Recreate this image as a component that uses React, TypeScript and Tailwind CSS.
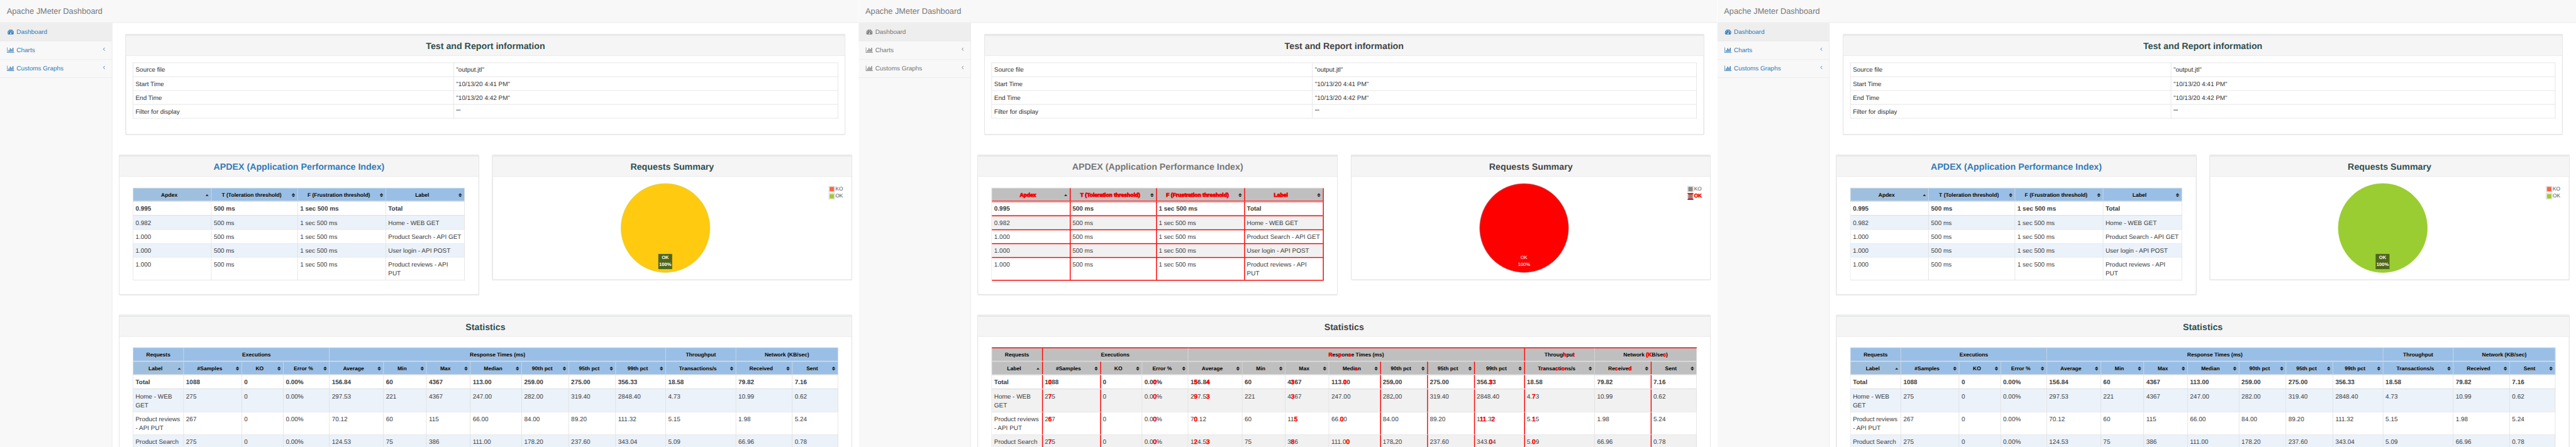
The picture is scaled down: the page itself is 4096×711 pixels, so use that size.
import React from "react";
import clsx from "clsx";

type Variant = "before" | "diff" | "after";

interface Theme {
  link: string;
  title: string;
  apdexTitle: string;
  bar: string;
  head: string;
  headSorted: string;
  zebra: string;
  info: string;
  pie: string;
  pieEdge: string;
  label: string;
  ko: string;
  ok: string;
}

const THEMES: Record<Variant, Theme> = {
  before: {
    link: "text-[#337ab7]",
    title: "text-[#2f4f4f]",
    apdexTitle: "text-[#337ab7]",
    bar: "bg-[#e7eaec]",
    head: "bg-[#99bfe6]",
    headSorted: "bg-[#9fbfdf]",
    zebra: "bg-[#ebf2fa]",
    info: "text-[#333]",
    pie: "fill-[#ffca10]",
    pieEdge: "stroke-[#c8dc6a]",
    label: "bg-[#4d661a] font-bold",
    ko: "bg-[#ff6347]",
    ok: "bg-[#9acd32]",
  },
  diff: {
    link: "text-[#777]",
    title: "text-[#444]",
    apdexTitle: "text-[#777]",
    bar: "bg-[#e8e8e8]",
    head: "bg-[#bfbfbf]",
    headSorted: "bg-[#bfbfbf]",
    zebra: "bg-[#f1f1f1]",
    info: "text-[#333]",
    pie: "fill-[#ff0000]",
    pieEdge: "stroke-[#999]",
    label: "",
    ko: "bg-[#888]",
    ok: "bg-[#888]",
  },
  after: {
    link: "text-[#337ab7]",
    title: "text-[#2f4f4f]",
    apdexTitle: "text-[#337ab7]",
    bar: "bg-[#e7eaec]",
    head: "bg-[#99bfe6]",
    headSorted: "bg-[#9fbfdf]",
    zebra: "bg-[#ebf2fa]",
    info: "text-[#333]",
    pie: "fill-[#9acd32]",
    pieEdge: "stroke-[#9acd32]",
    label: "bg-[#4d661a] font-bold",
    ko: "bg-[#ff6347]",
    ok: "bg-[#9acd32]",
  },
};

/* Characters between asterisks are the ones that changed; only the diff view marks them. */
function Marked({ text, variant }: { text: string; variant: Variant }) {
  const parts = text.split("*");
  if (variant !== "diff") return <>{parts.join("")}</>;
  return (
    <>
      {parts.map((p, i) =>
        i % 2 === 1 ? (
          <span key={i} className="text-[#ff0000] [-webkit-text-stroke:1px_#ff0000]">
            {p}
          </span>
        ) : (
          p
        ),
      )}
    </>
  );
}

function DashboardIcon() {
  return (
    <svg className="h-[14px] w-[18px] shrink-0 fill-current" viewBox="-256 0 2304 1792">
      <path d="M384 1152q0-53-37.5-90.5t-90.5-37.5-90.5 37.5-37.5 90.5 37.5 90.5 90.5 37.5 90.5-37.5 37.5-90.5zm192-448q0-53-37.5-90.5t-90.5-37.5-90.5 37.5-37.5 90.5 37.5 90.5 90.5 37.5 90.5-37.5 37.5-90.5zm428 481l101-382q6-26-7.5-48.5t-38.5-29.5-48 6.5-30 39.5l-101 382q-60 5-107 43.5t-63 98.5q-20 77 20 146t117 89 146-20 89-117q16-60-6-117t-72-91zm660-33q0-53-37.5-90.5t-90.5-37.5-90.5 37.5-37.5 90.5 37.5 90.5 90.5 37.5 90.5-37.5 37.5-90.5zm-640-640q0-53-37.5-90.5t-90.5-37.5-90.5 37.5-37.5 90.5 37.5 90.5 90.5 37.5 90.5-37.5 37.5-90.5zm448 192q0-53-37.5-90.5t-90.5-37.5-90.5 37.5-37.5 90.5 37.5 90.5 90.5 37.5 90.5-37.5 37.5-90.5zm320 448q0 261-141 483-19 29-54 29h-1402q-35 0-54-29-141-221-141-483 0-182 71-348t191-286 286-191 348-71 348 71 286 191 191 286 71 348z" />
    </svg>
  );
}

function ChartIcon() {
  return (
    <svg className="h-[14px] w-[18px] shrink-0 fill-current" viewBox="-128 0 2304 1792">
      <path d="M640 896v512h-256v-512h256zm384-512v1024h-256v-1024h256zm1024 1152v128h-2048v-1536h128v1408h1920zm-640-896v768h-256v-768h256zm384-384v1152h-256v-1152h256z" />
    </svg>
  );
}

function Chevron() {
  return (
    <svg className="mb-[5px] ml-auto h-[8px] w-[5px]" viewBox="0 0 5 8" fill="none" stroke="currentColor" strokeWidth="1.3">
      <path d="M4.5 0.5L1 4l3.5 3.5" />
    </svg>
  );
}

function SortIcon({ sorted }: { sorted?: boolean }) {
  return (
    <svg className="ml-[5px] h-[9px] w-[8px] shrink-0 fill-[#222]" viewBox="0 0 8 9">
      {sorted ? (
        <path d="M0.5 6.5L4 2.5l3.5 4z" />
      ) : (
        <>
          <path d="M0 4L4 0l4 4z" />
          <path d="M0 5h8L4 9z" />
        </>
      )}
    </svg>
  );
}

function Sidebar({ theme }: { theme: Theme }) {
  const item = "flex h-[41px] items-center border-b border-[#e7e7e7] pl-[15px] pr-[15px]";
  return (
    <nav className={clsx("w-[251px] shrink-0 border-r border-[#e7e7e7] bg-[#f8f8f8] text-[14px] leading-[20px]", theme.link)}>
      <a className={clsx(item, "bg-[#eeeeee]")}>
        <DashboardIcon />
        <span className="pl-[4px]">Dashboard</span>
      </a>
      <a className={item}>
        <ChartIcon />
        <span className="pl-[4px]">Charts</span>
        <Chevron />
      </a>
      <a className={item}>
        <ChartIcon />
        <span className="pl-[4px]">Customs Graphs</span>
        <Chevron />
      </a>
    </nav>
  );
}

interface PanelProps {
  title: string;
  titleClass: string;
  theme: Theme;
  className: string;
  children: React.ReactNode;
}

function Panel({ title, titleClass, theme, className, children }: PanelProps) {
  return (
    <section className={clsx("rounded-[2px] border border-[#ddd] bg-white shadow-[0_1px_1px_rgba(0,0,0,0.08)]", className)}>
      <div className={clsx("h-[4px]", theme.bar)} />
      <div className="flex h-[44px] items-center justify-center border-b border-[#e4e6e8] bg-[#f5f5f5] pt-[2px]">
        <h2 className={clsx("text-[20px] leading-[22px] font-bold", titleClass)}>{title}</h2>
      </div>
      {children}
    </section>
  );
}

const INFO = [
  ["Source file", '"output.jtl"'],
  ["Start Time", '"10/13/20 4:41 PM"'],
  ["End Time", '"10/13/20 4:42 PM"'],
  ["Filter for display", '""'],
];

function Columns({ widths }: { widths: number[] }) {
  return (
    <colgroup>
      {widths.map((w, i) => (
        <col key={i} style={{ width: w }} />
      ))}
    </colgroup>
  );
}

const TABLE = "table-fixed border-separate border-spacing-0 border-t border-l border-[#ddd] text-left text-[14px] leading-[20px]";

function InfoTable({ theme }: { theme: Theme }) {
  return (
    <table className={clsx(TABLE, "mx-[15px] mt-[15px] w-[1577px]", theme.info)}>
      <Columns widths={[717, 859]} />
      <tbody>
        {INFO.map(([k, v]) => (
          <tr key={k}>
            <td className="h-[31px] border-r border-b border-[#ddd] px-[5px] py-0">{k}</td>
            <td className="h-[31px] border-r border-b border-[#ddd] px-[5px] py-0">{v}</td>
          </tr>
        ))}
      </tbody>
    </table>
  );
}

const HEAD = "h-[30px] border-r border-b-2 border-[#ddd] p-0 text-[12px] leading-[18px] font-bold text-black";
const HEAD_SHADOW = "[text-shadow:0_1px_0_rgba(204,204,204,0.7)]";
const RED_RIGHT = "relative after:absolute after:top-0 after:bottom-0 after:-right-[2px] after:z-10 after:w-[2px] after:bg-[#ff0000] after:content-['']";
const RED_RIGHT_FULL = "relative after:absolute after:top-0 after:-bottom-[2px] after:-right-[2px] after:z-10 after:w-[2px] after:bg-[#ff0000] after:content-['']";
const RED_DOUBLE = "before:absolute before:left-0 before:right-0 before:-bottom-[3px] before:z-10 before:h-[3px] before:border-y before:border-[#ff0000] before:bg-[#ddd] before:content-['']";
const RED_BOTTOM = "before:absolute before:left-0 before:right-0 before:-bottom-[2px] before:z-10 before:h-[2px] before:bg-[#ff0000] before:content-['']";

const APDEX_HEAD = ["Apdex", "T (Toleration threshold)", "F (Frustration threshold)", "Label"];
const APDEX_ROWS = [
  ["0.995", "500 ms", "1 sec 500 ms", "Total"],
  ["0.982", "500 ms", "1 sec 500 ms", "Home - WEB GET"],
  ["1.000", "500 ms", "1 sec 500 ms", "Product Search - API GET"],
  ["1.000", "500 ms", "1 sec 500 ms", "User login - API POST"],
  ["1.000", "500 ms", "1 sec 500 ms", "Product reviews - API\nPUT"],
];

function ApdexTable({ theme, variant }: { theme: Theme; variant: Variant }) {
  const diff = variant === "diff";
  return (
    <table className={clsx(TABLE, "mx-[30px] mt-[25px] w-[742px] text-[#3d3d3d]")}>
      <Columns widths={[175, 193, 197, 176]} />
      <thead>
        <tr>
          {APDEX_HEAD.map((h, i) => (
            <th key={h} className={clsx(HEAD, i === 0 ? theme.headSorted : theme.head, diff && [RED_RIGHT_FULL, RED_DOUBLE])}>
              <div className="flex items-center px-[5px] pt-[2px]">
                <span className={clsx("flex-1 text-center whitespace-nowrap", diff ? "[-webkit-text-stroke:1.3px_#ff0000]" : HEAD_SHADOW)}>{h}</span>
                <SortIcon sorted={i === 0} />
              </div>
            </th>
          ))}
        </tr>
      </thead>
      <tbody>
        {APDEX_ROWS.map((row, r) => (
          <tr key={r} className={r % 2 === 1 ? theme.zebra : "bg-white"}>
            {row.map((c, i) => (
              <td
                key={i}
                className={clsx(
                  "border-r border-[#ddd] px-[5px] py-[5px] align-top whitespace-pre",
                  r === 0 ? "h-[32px] border-b-2 font-bold" : "border-b",
                  r > 0 && r < 4 && "h-[31px]",
                  r === 4 && "h-[51px]",
                  diff && RED_RIGHT_FULL,
                  diff && (r === 0 ? RED_DOUBLE : RED_BOTTOM),
                )}
              >
                {c}
              </td>
            ))}
          </tr>
        ))}
      </tbody>
    </table>
  );
}

const GROUPS: { text: string; span: number; red?: boolean }[] = [
  { text: "Requests", span: 1, red: true },
  { text: "Executions", span: 3 },
  { text: "*R*es*p*on*s*e Times (ms)", span: 7, red: true },
  { text: "Throug*h*pu*t*", span: 1 },
  { text: "Network *(K*B/se*c*)", span: 2 },
];

const STAT_WIDTHS = [113, 130, 93, 103, 121, 96, 98, 115, 105, 105, 112, 157, 126, 102];
const STAT_HEAD = [
  "Label", "#Samples", "KO", "Error %", "Average", "Min", "Max", "Medi*a*n",
  "90th pct", "95th pct", "99th pct", "T*r*ansa*c*ti*o*ns/s", "Re*c*eive*d*", "Sent",
];
const RED_COLUMNS = [0, 1, 7, 8, 9, 10, 12];
const STAT_ROWS = [
  ["Total", "1*0*88", "0", "0.0*0*%", "1*5*6.8*4*", "60", "4*3*67", "113.*0*0", "259*.*00", "275.00", "356.*3*3", "18.58", "79.82", "7.16"],
  ["Home - WEB\nGET", "2*7*5", "0", "0.0*0*%", "2*9*7.5*3*", "221", "4*3*67", "247.00", "282*.*00", "319.40", "2848.40", "4.*7*3", "10.99", "0.62"],
  ["Product reviews\n- API PUT", "2*6*7", "0", "0.0*0*%", "7*0*.12", "60", "11*5*", "66.*0*0", "84.00", "89.20", "1*11*.3*2*", "5.*1*5", "1.98", "5.24"],
  ["Product Search", "2*7*5", "0", "0.0*0*%", "1*2*4.5*3*", "75", "3*8*6", "111.0*0*", "178*.*20", "237.60", "343.*0*4", "5.*0*9", "66.96", "0.78"],
];

function StatsTable({ theme, variant }: { theme: Theme; variant: Variant }) {
  const diff = variant === "diff";
  return (
    <table className={clsx(TABLE, "mx-[30px] mt-[24px] w-[1577px] text-[#3d3d3d]")}>
      <Columns widths={STAT_WIDTHS} />
      <thead>
        <tr>
          {GROUPS.map((g) => (
            <th
              key={g.text}
              colSpan={g.span}
              className={clsx(
                "h-[31px] border-r border-b-2 border-[#ddd] p-0 pt-[2px] text-center text-[12px] leading-[18px] font-bold text-black",
                HEAD_SHADOW,
                theme.head,
                diff && g.red && RED_RIGHT,
                diff && "relative before:absolute before:-top-px before:left-0 before:-right-px before:z-10 before:h-[2px] before:bg-[#ff0000] before:content-['']",
              )}
            >
              <Marked text={g.text} variant={variant} />
            </th>
          ))}
        </tr>
        <tr>
          {STAT_HEAD.map((h, i) => (
            <th key={h} className={clsx(HEAD, i === 0 ? theme.headSorted : theme.head, diff && RED_COLUMNS.includes(i) && RED_RIGHT)}>
              <div className="flex items-center px-[5px] pt-[2px]">
                <span className={clsx("flex-1 text-center whitespace-nowrap", HEAD_SHADOW)}>
                  <Marked text={h} variant={variant} />
                </span>
                <SortIcon sorted={i === 0} />
              </div>
            </th>
          ))}
        </tr>
      </thead>
      <tbody>
        {STAT_ROWS.map((row, r) => (
          <tr key={r} className={r % 2 === 1 ? theme.zebra : "bg-white"}>
            {row.map((c, i) => (
              <td
                key={i}
                className={clsx(
                  "border-r border-[#ddd] px-[5px] py-[5px] align-top whitespace-pre",
                  r === 0 ? "h-[32px] border-b-2 font-bold" : "h-[51px] border-b",
                  diff && RED_COLUMNS.includes(i) && RED_RIGHT,
                )}
              >
                <Marked text={c} variant={variant} />
              </td>
            ))}
          </tr>
        ))}
      </tbody>
    </table>
  );
}

function Summary({ theme, variant }: { theme: Theme; variant: Variant }) {
  const diff = variant === "diff";
  return (
    <div className="relative h-[230px] text-[11.67px] leading-[16px] text-[#545454]">
      <svg className="absolute top-[14px] left-[285px] h-[202px] w-[202px]" viewBox="0 0 202 202">
        <circle cx="101" cy="101" r="99.5" strokeWidth="1" className={clsx(theme.pie, theme.pieEdge)} />
      </svg>
      <div className={clsx("absolute top-[173px] left-[370px] h-[34px] w-[31px] pt-[2px] text-center text-[10.67px] leading-[15px] text-white", theme.label)}>
        OK
        <br />
        100%
      </div>
      <div className="absolute top-[20px] right-[15px] flex w-[36px] flex-col">
        <div className="flex h-[16px] items-center">
          <div className="mr-px size-[14px] border border-[#ccc] bg-white p-px">
            <div className={clsx("size-[10px]", theme.ko)} />
          </div>
          KO
        </div>
        <div className="flex h-[16px] items-center">
          {diff ? (
            <div className={clsx("mr-px h-[15px] w-[14px] border-x-2 border-y-[3px] border-x-[#ddd] border-y-[#ff0000]", theme.ok)} />
          ) : (
            <div className="mr-px size-[14px] border border-[#ccc] bg-white p-px">
              <div className={clsx("size-[10px]", theme.ok)} />
            </div>
          )}
          <span className={diff ? "text-[#ff0000] [-webkit-text-stroke:1px_#ff0000]" : ""}>OK</span>
        </div>
      </div>
    </div>
  );
}

function Screen({ variant }: { variant: Variant }) {
  const theme = THEMES[variant];
  return (
    <div className="flex h-[1000px] w-[1920px] shrink-0 flex-col overflow-hidden bg-white">
      <header className="flex h-[51px] shrink-0 items-center border-b border-[#e7e7e7] bg-[#f8f8f8] pl-[15px] text-[18px] leading-[20px] text-[#777]">
        Apache JMeter Dashboard
      </header>
      <div className="flex h-[949px]">
        <Sidebar theme={theme} />
        <main className="flex flex-1 flex-col px-[15px] pt-[25px]">
          <Panel title="Test and Report information" titleClass={theme.title} theme={theme} className="mx-[15px] h-[225px] shrink-0">
            <InfoTable theme={theme} />
          </Panel>
          <div className="mt-[45px] flex shrink-0 items-start justify-between">
            <Panel title="APDEX (Application Performance Index)" titleClass={theme.apdexTitle} theme={theme} className="h-[313px] w-[805px]">
              <ApdexTable theme={theme} variant={variant} />
            </Panel>
            <Panel title="Requests Summary" titleClass={theme.title} theme={theme} className="h-[280px] w-[804px]">
              <Summary theme={theme} variant={variant} />
            </Panel>
          </div>
          <Panel title="Statistics" titleClass={theme.title} theme={theme} className="mt-[45px] h-[420px] shrink-0">
            <StatsTable theme={theme} variant={variant} />
          </Panel>
        </main>
      </div>
    </div>
  );
}

export default function App() {
  return (
    <div className="h-[711px] w-[4096px] overflow-hidden bg-white font-['Liberation_Sans',Arial,sans-serif] [text-rendering:geometricPrecision]">
      <div className="flex h-[1000px] w-[5760px] origin-top-left scale-[0.71111]">
        <Screen variant="before" />
        <Screen variant="diff" />
        <Screen variant="after" />
      </div>
    </div>
  );
}
